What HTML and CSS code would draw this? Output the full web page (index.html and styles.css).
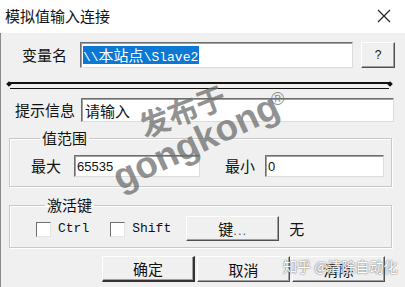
FILE: index.html
```html
<!DOCTYPE html>
<html lang="zh-CN">
<head>
    <meta charset="UTF-8">
    <title>模拟值输入连接</title>
    <link rel="stylesheet" href="styles.css">
</head>
<body>
    <div class="window">
        <div class="titlebar">
            <span class="title">模拟值输入连接</span>
            <svg class="close" width="14" height="14" viewBox="0 0 14 14">
                <path d="M1 1 L13 13 M13 1 L1 13" stroke="#222" stroke-width="1.2" fill="none"/>
            </svg>
        </div>

        <div class="dialog">
            <div class="row row-var">
                <label class="lbl lbl-var">变量名</label>
                <div class="field field-var"><span class="sel"><span class="mono">\\</span>本站点<span class="mono">\Slave2</span></span></div>
                <button class="btn btn-help">?</button>
            </div>

            <div class="separator"></div>

            <div class="row row-hint">
                <label class="lbl lbl-hint">提示信息</label>
                <div class="field field-hint">请输入</div>
            </div>

            <fieldset class="group group-range">
                <legend>值范围</legend>
                <div class="range-row">
                    <label class="lbl lbl-max">最大</label>
                    <div class="field field-num field-max">65535</div>
                    <label class="lbl lbl-min">最小</label>
                    <div class="field field-num field-min">0</div>
                </div>
            </fieldset>

            <fieldset class="group group-key">
                <legend>激活键</legend>
                <div class="key-row">
                    <span class="check"></span><span class="mono check-text">Ctrl</span>
                    <span class="check check-shift"></span><span class="mono check-text">Shift</span>
                    <button class="btn btn-key">键<span class="dots">...</span></button>
                    <span class="key-value">无</span>
                </div>
            </fieldset>

            <div class="actions">
                <button class="btn btn-action btn-default">确定</button>
                <button class="btn btn-action">取消</button>
                <button class="btn btn-action">清除</button>
            </div>
        </div>

        <!-- watermarks laid over the dialog -->
        <div class="wm wm-cn">发布于</div>
        <div class="wm wm-en">gongkong</div>
        <div class="wm wm-reg">®</div>
        <div class="zhihu">知乎 @清除自动化</div>
    </div>
</body>
</html>
```

FILE: styles.css
```css
/* Reset */
body, fieldset, legend, button, label {
    margin: 0;
    padding: 0;
    box-sizing: border-box;
}

body {
    width: 405px;
    height: 287px;
    overflow: hidden;
    font-family: "Noto Sans CJK SC", sans-serif;
    color: #111;
    background: #f0f0f0;
}

.window {
    position: relative;
    width: 405px;
    height: 287px;
}

/* Title bar */
.titlebar {
    height: 33px;
    background: #fff;
    display: flex;
    align-items: center;
    justify-content: space-between;
    padding: 0 14px 0 5px;
}

.title {
    font-size: 15px;
    line-height: 20px;
    margin-top: -2px;
}

.close {
    margin-top: -1px;
}

/* Dialog body */
.dialog {
    height: 254px;
    background: #f0f0f0;
    border-left: 1px solid #8a8a8a;
    padding: 9px 0 0 7px;
}

.mono {
    font-family: "Liberation Mono", monospace;
    font-size: 13px;
}

.lbl {
    font-size: 15px;
    line-height: 20px;
}

.row {
    display: flex;
    align-items: center;
}

/* Sunken edit box */
.field {
    background: #fff;
    border-top: 1px solid #6e6e6e;
    border-left: 1px solid #6e6e6e;
    border-right: 1px solid #dcdcdc;
    border-bottom: 1px solid #dcdcdc;
    box-shadow: inset 1px 1px 0 #a0a0a0;
    display: flex;
    align-items: center;
    font-size: 15px;
}

/* Raised push button */
.btn {
    background: #f0f0f0;
    border-top: 1px solid #fff;
    border-left: 1px solid #fff;
    border-right: 1px solid #505050;
    border-bottom: 1px solid #505050;
    box-shadow: inset -1px -1px 0 #a0a0a0;
    font-family: "Noto Sans CJK SC", sans-serif;
    font-size: 15px;
    color: #111;
    padding: 0;
}

.row-var {
    height: 26px;
}

.lbl-var {
    margin-left: 14px;
    width: 58px;
}

.field-var {
    width: 269px;
    height: 24px;
    padding-left: 2px;
}

.sel {
    background: #0a78d4;
    color: #fff;
    height: 18px;
    line-height: 18px;
    padding-right: 1px;
    font-size: 15px;
}

.btn-help {
    width: 34px;
    height: 26px;
    margin-left: 8px;
    font-family: "Liberation Sans", sans-serif;
    font-size: 12px;
}

/* Double rule with end marks */
.separator {
    position: relative;
    margin: 14px 0 0 2px;
    width: 379px;
    height: 4px;
    border-top: 2px solid #111;
    border-bottom: 1px solid #111;
}

.separator::before,
.separator::after {
    content: "";
    position: absolute;
    top: -2px;
    width: 4px;
    height: 4px;
    background: #111;
    transform: rotate(45deg);
}

.separator::before {
    left: -3px;
}

.separator::after {
    right: -3px;
}

.row-hint {
    margin-top: 10px;
    height: 22px;
}

.lbl-hint {
    margin-left: 7px;
    width: 66px;
}

.field-hint {
    width: 308px;
    height: 22px;
    padding-left: 3px;
}

/* Group boxes */
.group {
    width: 383px;
    margin: 7px 0 0 1px;
    border: 1px solid #c8c8c8;
    box-shadow: inset 1px 1px 0 #fff, 1px 1px 0 #fff;
    min-width: 0;
}

.group legend {
    font-size: 15px;
    line-height: 20px;
    padding: 0 2px;
    margin-left: 9px;
}

.group-range {
    padding: 8px 0 10px 21px;
}

.range-row {
    display: flex;
    align-items: center;
    height: 20px;
}

.lbl-max {
    width: 43px;
}

.field-num {
    height: 20px;
    padding-left: 2px;
    font-family: "Liberation Sans", sans-serif;
    font-size: 13px;
}

.field-max {
    width: 122px;
}

.lbl-min {
    margin-left: 25px;
    width: 40px;
}

.field-min {
    width: 115px;
}

.group-key {
    margin-top: 8px;
    padding: 1px 0 6px 26px;
}

.key-row {
    display: flex;
    align-items: center;
    height: 25px;
}

.check {
    width: 13px;
    height: 13px;
    background: #fff;
    border-top: 1px solid #6e6e6e;
    border-left: 1px solid #6e6e6e;
    border-right: 1px solid #e4e4e4;
    border-bottom: 1px solid #e4e4e4;
    margin-top: 2px;
}

.check-text {
    margin-left: 7px;
    font-size: 13px;
}

.check-shift {
    margin-left: 21px;
}

.btn-key {
    width: 93px;
    height: 25px;
    margin-left: 15px;
}

.dots {
    font-family: "Liberation Sans", sans-serif;
    font-size: 13px;
    color: #555;
    letter-spacing: 1px;
}

.key-value {
    margin-left: 10px;
    font-size: 15px;
}

/* Bottom buttons */
.actions {
    display: flex;
    gap: 2px;
    margin: 8px 0 0 94px;
}

.btn-action {
    width: 93px;
    height: 26px;
}

.btn-default {
    border-right: 2px solid #333;
    border-bottom: 2px solid #333;
}

/* Watermarks */
.wm {
    position: absolute;
    height: 40px;
    line-height: 40px;
    color: rgba(110, 110, 110, 0.75);
    font-weight: bold;
    transform-origin: 0 50%;
    white-space: nowrap;
    pointer-events: none;
}

.wm-cn {
    left: 140px;
    top: 106px;
    font-size: 30px;
    transform: rotate(-21deg);
}

.wm-en {
    left: 115px;
    top: 160px;
    font-family: "Liberation Sans", sans-serif;
    font-size: 37px;
    transform: rotate(-25deg);
}

.wm-reg {
    left: 271px;
    top: 79px;
    font-family: "Liberation Sans", sans-serif;
    font-size: 18px;
    font-weight: normal;
}

.zhihu {
    position: absolute;
    left: 283px;
    top: 257px;
    font-size: 14px;
    line-height: 18px;
    color: #fff;
    text-shadow: 0 0 2px #777, 0 0 1px #777;
}
```
